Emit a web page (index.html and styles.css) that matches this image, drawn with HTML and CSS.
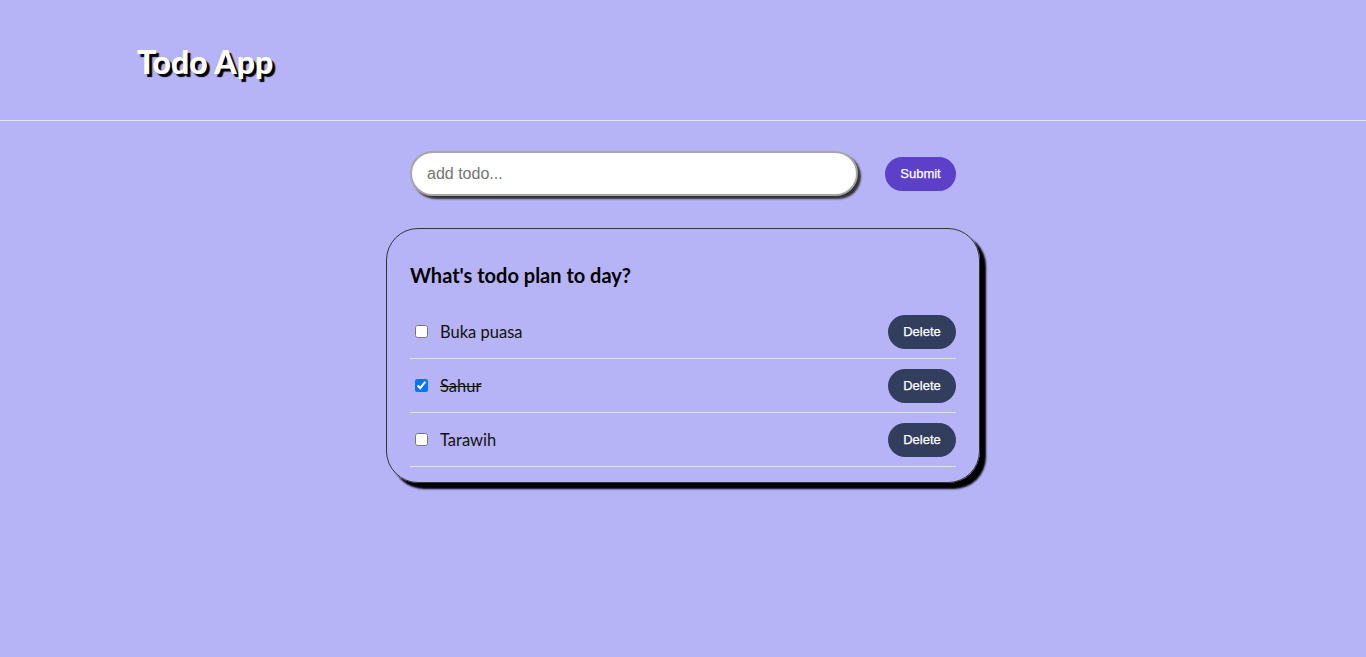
FILE: index.html
```html
<!DOCTYPE html>
<html lang="en">
<head>
<meta charset="utf-8">
<title>Todo App</title>
<link rel="stylesheet" href="styles.css">
</head>
<body>
<header class="header">
  <h1 class="title">Todo App</h1>
</header>
<main class="main">
  <form class="add-form">
    <input class="add-input" type="text" placeholder="add todo...">
    <button class="submit-btn" type="button">Submit</button>
  </form>
  <section class="card">
    <h2 class="card-title">What's todo plan to day?</h2>
    <ul class="todo-list">
      <li class="todo-item">
        <label class="todo-label"><input type="checkbox" class="todo-check"><span class="todo-text">Buka puasa</span></label>
        <button class="delete-btn" type="button">Delete</button>
      </li>
      <li class="todo-item">
        <label class="todo-label"><input type="checkbox" class="todo-check" checked><span class="todo-text done">Sahur</span></label>
        <button class="delete-btn" type="button">Delete</button>
      </li>
      <li class="todo-item">
        <label class="todo-label"><input type="checkbox" class="todo-check"><span class="todo-text">Tarawih</span></label>
        <button class="delete-btn" type="button">Delete</button>
      </li>
    </ul>
  </section>
</main>
</body>
</html>
```
FILE: styles.css
```css
* { box-sizing: border-box; }
html, body { margin: 0; padding: 0; }
body {
  background: #b6b4f6;
  min-height: 657px;
  font-family: "Lato", "Open Sans", sans-serif;
}
.header {
  height: 121px;
  border-bottom: 1px solid #e4e4ee;
  padding: 43px 0 0 137px;
}
.title {
  margin: 0;
  font-family: "Lato", sans-serif;
  font-weight: 900;
  font-size: 32px;
  letter-spacing: 0;
  line-height: 38px;
  color: #fff;
  text-shadow: 3px 3px 1px #000;
}
.main {
  display: flex;
  flex-direction: column;
  align-items: center;
  padding-top: 30px;
}
.add-form {
  display: flex;
  align-items: center;
  gap: 27px;
  width: 546px;
}
.add-input {
  width: 448px;
  height: 45px;
  border-radius: 23px;
  border: 2px solid #a6a6a6;
  background: #fff;
  box-shadow: 3px 3px 2px #333;
  padding: 0 15px;
  font-family: "Liberation Sans", Arial, sans-serif;
  font-size: 16px;
  outline: none;
}
.add-input::placeholder { color: #757575; }
.submit-btn {
  width: 71px;
  height: 34px;
  border: none;
  border-radius: 17px;
  background: #5c40c7;
  color: #fff;
  font-family: "Liberation Sans", Arial, sans-serif;
  font-size: 13px;
  font-weight: 400;
  -webkit-text-stroke: 0.25px #fff;
  padding: 0;
}
.card {
  margin-top: 32px;
  width: 594px;
  border: 1px solid #333;
  border-radius: 32px;
  box-shadow: 6px 6px 2px #000;
  padding: 34px 23px 15px;
}
.card-title {
  margin: 0 0 18px;
  font-size: 20px;
  line-height: 24px;
  font-weight: 700;
  color: #000;
}
.todo-list {
  list-style: none;
  margin: 0;
  padding: 0;
}
.todo-item {
  display: flex;
  align-items: center;
  justify-content: space-between;
  height: 54px;
  border-bottom: 1px solid #e0e0ee;
}
.todo-label {
  display: flex;
  align-items: center;
}
.todo-check {
  margin: 0 0 0 5px;
  width: 13px;
  height: 13px;
}
.todo-text {
  margin-left: 12px;
  font-size: 16.5px;
  color: #111;
}
.todo-text.done { text-decoration: line-through; }
.delete-btn {
  width: 68px;
  height: 34px;
  border: none;
  border-radius: 17px;
  background: #333e5f;
  color: #fff;
  font-family: "Liberation Sans", Arial, sans-serif;
  font-size: 13px;
  font-weight: 400;
  -webkit-text-stroke: 0.25px #fff;
  padding: 0;
}
```
